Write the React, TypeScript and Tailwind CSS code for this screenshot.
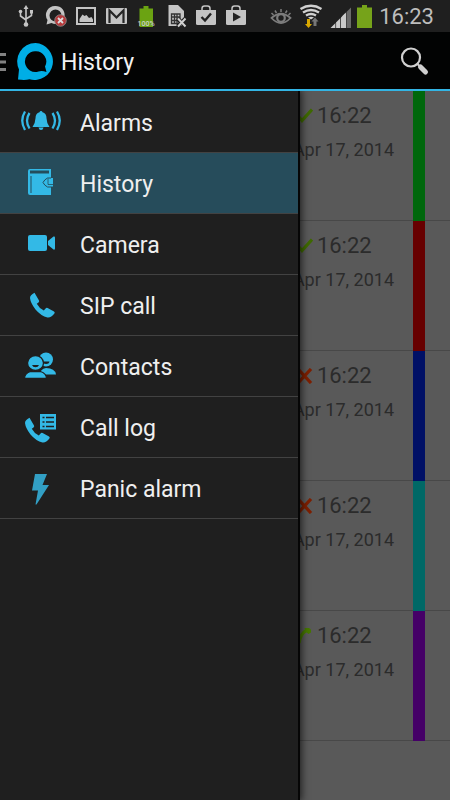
import type { ReactNode } from "react";

const CYAN = "#33b9e6";

function StatusIcon({ label, children }: { label: string; children: ReactNode }) {
  return (
    <svg role="img" aria-label={label} viewBox="0 0 30 32" className="h-8 w-[30px] shrink-0" fill="none">
      {children}
    </svg>
  );
}

function StatusBar() {
  return (
    <div className="flex h-8 items-center justify-between bg-[#1f1f1f] pr-4 pl-[11px]">
      <div className="flex">
        <StatusIcon label="USB connected">
          <path d="M15 8v16M9.500 12v4l5.500 4M20.500 12v3.500L15 19" stroke="#c4c4c4" strokeWidth="1.600" />
          <path d="M15 5l2.500 4h-5z" fill="#c4c4c4" />
          <circle cx="15" cy="24.500" r="2.300" fill="#c4c4c4" />
          <circle cx="9.500" cy="11.500" r="1.800" fill="#c4c4c4" />
          <path d="M19 10h3v3.500h-3z" fill="#c4c4c4" />
        </StatusIcon>
        <StatusIcon label="SIP offline">
          <path fillRule="evenodd" d="M14.500 6a9 9 0 1 1-4 17L5.500 24.500l1-4.500A9 9 0 0 1 14.500 6zm0 3.500a6 6 0 1 0 0 12 6 6 0 0 0 0-12z" fill="#c4c4c4" />
          <circle cx="19.500" cy="20.500" r="5.800" fill="#b5393b" stroke="#8f8f8f" strokeWidth=".8" />
          <path d="M17 18l5 5M22 18l-5 5" stroke="#ddd" strokeWidth="1.800" />
        </StatusIcon>
        <StatusIcon label="Screenshot">
          <rect x="6" y="8" width="18" height="16" stroke="#c4c4c4" strokeWidth="2" />
          <path d="M8.500 22v-3l3-4.500 2 1.500 2-1 2.500 3 2.500-1 1.500 2.500V22z" fill="#c4c4c4" />
        </StatusIcon>
        <StatusIcon label="New mail">
          <rect x="5" y="8" width="21" height="16" rx="1" fill="#c4c4c4" />
          <path d="M8.500 23V10.500l7 7 7-7V23" stroke="#252525" strokeWidth="2.200" />
        </StatusIcon>
        <StatusIcon label="Battery full">
          <path d="M12.500 6h5v2.500H22V27H8.500V8.500h4z" fill="#6ba312" />
          <text x="15" y="26" textAnchor="middle" fontSize="7" fontWeight="500" fill="#d0d0d0" fontFamily="Roboto, sans-serif">100%</text>
        </StatusIcon>
        <StatusIcon label="No SIM card">
          <path d="M7.500 5H17l6 6v15H7.500z" fill="#c4c4c4" />
          <path d="M10.500 14h8.500v9.500h-8.500zM13.500 14v9.500M16 14v9.500M10.500 17h8.500M10.500 20.500h8.500" stroke="#333" strokeWidth="1.300" />
          <path d="M16.500 18.500l8 8M24.500 18.500l-8 8" stroke="#1f1f1f" strokeWidth="4" />
          <path d="M17 18.500l7.500 8M24.500 18.500l-7.500 8" stroke="#d0d0d0" strokeWidth="2" />
        </StatusIcon>
        <StatusIcon label="App updated">
          <path d="M11 11V8.500q0-2.500 2.500-2.500h3Q19 6 19 8.500V11" stroke="#c4c4c4" strokeWidth="1.500" />
          <path d="M5 10h20v13.500q0 1.500-1.500 1.500h-17Q5 25 5 23.500z" fill="#c4c4c4" />
          <path d="M10.500 17l3.500 3.500 6-7" stroke="#222" strokeWidth="2.400" />
        </StatusIcon>
        <StatusIcon label="Play Store">
          <path d="M11 11V8.500q0-2.500 2.500-2.500h3Q19 6 19 8.500V11" stroke="#c4c4c4" strokeWidth="1.500" />
          <path d="M5 10h20v13.500q0 1.500-1.500 1.500h-17Q5 25 5 23.500z" fill="#c4c4c4" />
          <path d="M12 12.500l8 4.500-8 4.500z" fill="#222" />
        </StatusIcon>
      </div>
      <div className="flex items-center">
        <StatusIcon label="Smart stay">
          <path d="M5.500 18Q15 9.500 24.500 18 15 28 5.500 18z" stroke="#7d7d7d" strokeWidth="1.800" />
          <circle cx="15" cy="18" r="3.800" stroke="#7d7d7d" strokeWidth="2.200" />
          <path d="M15 9v3M9 10.500l1.500 2.500M21 10.500L19.500 13M5.500 13l2 2M24.500 13l-2 2" stroke="#7d7d7d" strokeWidth="1.500" />
        </StatusIcon>
        <StatusIcon label="Wi-Fi">
          <path d="M4.500 9Q15 2.500 25.500 9M7 12.500q8-5 16 0M10 15.500q5-3 10 0" stroke="#d0d0d0" strokeWidth="2.400" />
          <path d="M12 17.500q3-1.500 6 0l-3 2z" fill="#d0d0d0" />
          <path d="M11 19h3v5h2l-3.500 4L9 24h2z" fill="#d9a800" />
          <path d="M17.500 26h3v-4.500h2L19 17.500l-3.500 4h2z" fill="#777" />
        </StatusIcon>
        <StatusIcon label="Signal strength">
          <path d="M4.500 28l5-5v5zM10 28v-5.500l4-4V28zM15 28V17.500l4-4V28z" fill="#c9c9c9" />
          <path d="M16.500 28V16l3.500-3.500V28z" fill="#c9c9c9" />
          <path d="M20.500 28V12L25 7.500V28z" fill="#6b6b6b" />
          <path d="M9.700 23v5M14.500 18v10" stroke="#555" strokeWidth=".8" />
        </StatusIcon>
        <svg role="img" aria-label="Battery" viewBox="0 0 18 32" className="h-8 w-[18px]">
          <path d="M6 5h5v2.500h5V28H1V7.500h5z" fill="#76a31a" />
        </svg>
        <time className="ml-[5px] pt-px text-[22px] leading-8 text-[#bdbdbd]">16:23</time>
      </div>
    </div>
  );
}

function Header() {
  return (
    <header className="flex h-[59px] items-center justify-between border-b-2 border-[#33b5e5] bg-[#020303]">
      <div className="flex items-center">
        <button type="button" aria-label="Toggle menu" className="flex items-center gap-[11px]">
          <svg viewBox="0 0 6 20" className="h-5 w-[6px]" fill="#828282">
            <path d="M0 2h6v3H0zM0 9.500h6v3H0zM0 17h6v3H0z" />
          </svg>
          <svg viewBox="0 0 38 40" className="h-10 w-[38px]" fill="#00aee6">
            <path
              fillRule="evenodd"
              d="M18.500 2a18.500 18.500 0 1 1-6 36.300Q8 39.500 1 38.500L2 28.500A18.500 18.500 0 0 1 18.500 2zM18 10.200a10.400 10.400 0 1 0 3.500 20.300Q25 29.500 29.500 31L28 25.500A10.400 10.400 0 0 0 18 10.200z"
            />
          </svg>
        </button>
        <h1 className="ml-[6px] pt-1 text-[23px] leading-8 text-[#f2f2f2]">History</h1>
      </div>
      <button type="button" aria-label="Search" className="mr-5">
        <svg viewBox="0 0 30 30" className="h-[30px] w-[30px]" fill="none">
          <circle cx="11" cy="11.500" r="9" stroke="#d0d0d0" strokeWidth="2.200" />
          <path d="M17 17.500l3 3" stroke="#d0d0d0" strokeWidth="2" />
          <path d="M20.500 21l5 5" stroke="#d0d0d0" strokeWidth="5" strokeLinecap="round" />
        </svg>
      </button>
    </header>
  );
}

const HANDSET =
  "M4.500.8L9 8.500Q9.600 9.600 8.500 10.500L6.800 11.800Q9 16 13.800 18.600L15.600 16.500Q16.400 15.400 17.600 16L24 19.500Q25.300 20.400 24.400 21.500Q21 26 17.500 25.500Q11 24 5.500 17.500Q.5 11 0 6Q0 3 4.500.8z";

const menu: { label: string; icon: ReactNode }[] = [
  {
    label: "Alarms",
    icon: (
      <>
        <path d="M21 9q1.200 0 1.500 1.200 4 .8 4 6 .2 5 3 8.800H12.500q2.800-3.800 3-8.800 0-5.200 4-6Q19.800 9 21 9z" fill={CYAN} />
        <path d="M18.500 25.500h5Q23 28 21 28t-2.500-2.500z" fill={CYAN} />
        <path d="M5 9.500Q-.5 18.500 5 28M9.500 11Q4.500 18.500 9.500 26.500M37 9.500q5.500 9 0 18.500M32.500 11q5 7.500 0 15.500" stroke={CYAN} strokeWidth="2.300" />
      </>
    ),
  },
  {
    label: "History",
    icon: (
      <>
        <path d="M10 6h21v9h2v9h-2v8H10q-2 0-2-2V8q0-2 2-2z" fill={CYAN} />
        <path d="M10 7.500h19v3H10z" fill="#244d5c" />
        <path d="M10.500 13h1v17h-1z" fill="#244d5c" />
        <path d="M31 15h-3.500q-3 1.500-4.500 4.500 1.500 3 4.500 4.500H33" stroke="#244d5c" strokeWidth="1" />
        <path d="M28 15.500v6h5" stroke="#244d5c" strokeWidth=".8" />
      </>
    ),
  },
  {
    label: "Camera",
    icon: (
      <>
        <rect x="8" y="11" width="19" height="16" rx="2" fill={CYAN} />
        <path d="M28 17l5.500-4.500q1.500-.5 1.500 1v11q0 1.500-1.500 1L28 21z" fill={CYAN} />
      </>
    ),
  },
  { label: "SIP call", icon: <path transform="translate(10 7)" d={HANDSET} fill={CYAN} /> },
  {
    label: "Contacts",
    icon: (
      <>
        <circle cx="26" cy="13.500" r="7" fill={CYAN} />
        <path d="M20 28.500q0-5.500 6-6.500 9 0 10 6.500z" fill={CYAN} />
        <path d="M23 15.500h6.500q-.5 2.500-3.500 2.500t-3-2.500z" fill="#1f1f1f" />
        <path d="M4.500 32.500q0-5 6-7h10q6 2 6 7z" fill={CYAN} stroke="#1f1f1f" strokeWidth="1.300" />
        <ellipse cx="15.500" cy="17" rx="8" ry="7.500" fill={CYAN} stroke="#1f1f1f" strokeWidth="1.300" />
        <path d="M12 19h7q-.8 2.300-3.500 2.300T12 19z" fill="#1f1f1f" />
      </>
    ),
  },
  {
    label: "Call log",
    icon: (
      <>
        <path transform="translate(5 10)" d={HANDSET} fill={CYAN} />
        <path d="M20 7h16v15.500H20z" fill={CYAN} />
        <path d="M22.500 10.500h2M26 10.500h8M22.500 15h2M26 15h8M22.500 19.500h2M26 19.500h8" stroke="#1f1f1f" strokeWidth="1.600" />
      </>
    ),
  },
  { label: "Panic alarm", icon: <path d="M15 6h12l-4.500 11H29L16.500 36.500h-1l2.500-14h-6z" fill="#329fc4" /> },
];

function Drawer() {
  return (
    <nav
      aria-label="Main menu"
      className="absolute inset-y-0 left-0 w-[300px] border-r-2 border-[#060606] bg-[#1f1f1f] shadow-[1px_0_7px_1px_rgba(0,0,0,0.6)]"
    >
      <ul className="pt-px">
        {menu.map(({ label, icon }) => (
          <li key={label} className="border-b border-[#424242]">
            <a
              href="#"
              aria-current={label === "History" ? "page" : undefined}
              className="flex h-[60px] items-center gap-[18px] pl-5 text-[23px] leading-8 text-[#efefef] aria-[current=page]:bg-[#264c5b]"
            >
              <svg aria-hidden="true" viewBox="0 0 42 40" className="h-10 w-[42px] shrink-0" fill="none">
                {icon}
              </svg>
              <span className="pt-1">{label}</span>
            </a>
          </li>
        ))}
      </ul>
    </nav>
  );
}

const doneIcon = <path d="M1 8l4 4.500L15 1.500" stroke="#3f6a00" strokeWidth="3.200" />;
const failedIcon = <path d="M1 1l13 14M14 1L1 15" stroke="#7d1f00" strokeWidth="3.200" />;
const answeredIcon = (
  <>
    <path d="M2 15Q3 6 10 2" stroke="#467700" strokeWidth="3.200" />
    <path d="M7.500 0q5.500-1 6.500 2v2.500L11.500 6 8.500 3.500z" fill="#467700" />
  </>
);

const events: { icon: ReactNode; bar: string }[] = [
  { icon: doneIcon, bar: "bg-[#00670c]" },
  { icon: doneIcon, bar: "bg-[#670000]" },
  { icon: failedIcon, bar: "bg-[#001066]" },
  { icon: failedIcon, bar: "bg-[#006866]" },
  { icon: answeredIcon, bar: "bg-[#450067]" },
];

function HistoryList() {
  return (
    <ul>
      {events.map(({ icon, bar }, i) => (
        <li key={i} className="flex h-[130px] justify-end">
          <div className="flex grow justify-end border-b border-[#484848] pr-[19px] text-[#2b2b2b]">
            <div className="pt-[9px]">
              <div className="flex items-center gap-1 pl-1">
                <svg aria-hidden="true" viewBox="0 0 16 16" className="h-4 w-4" fill="none">
                  {icon}
                </svg>
                <time className="text-[22px] leading-8">16:22</time>
              </div>
              <div className="text-[18px] leading-9">Apr 17, 2014</div>
            </div>
          </div>
          <div className={`w-3 ${bar}`} />
          <div className="w-[25px] border-b border-[#484848]" />
        </li>
      ))}
    </ul>
  );
}

export default function App() {
  return (
    <div className="flex min-h-screen flex-col bg-[#595959] font-['Roboto',sans-serif]">
      <StatusBar />
      <Header />
      <main className="relative grow overflow-hidden">
        <HistoryList />
        <Drawer />
      </main>
    </div>
  );
}
